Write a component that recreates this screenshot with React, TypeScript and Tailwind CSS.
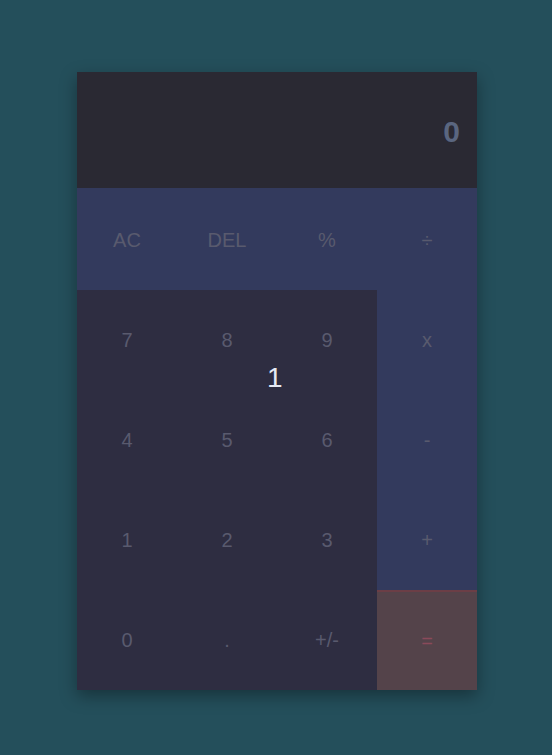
import React from 'react';

const ROWS: string[][] = [
  ['AC', 'DEL', '%', '÷'],
  ['7', '8', '9', 'x'],
  ['4', '5', '6', '-'],
  ['1', '2', '3', '+'],
  ['0', '.', '+/-', '='],
];

function Key({ label, col, row }: { label: string; col: number; row: number }) {
  const isOp = row === 0 || col === 3;
  const isEq = label === '=';
  const bg = isEq ? 'bg-[#54434a] border-t-2 border-[#6b3e46]' : isOp ? 'bg-[#333a5d]' : 'bg-[#2e2d41]';
  const h = row === 0 ? 'h-[102px] pt-[2px]' : 'h-[100px]';
  return (
    <div className={`${bg} ${h} flex items-center justify-center text-[20px] text-[#595a6e]`}>
      <span className={isEq ? 'text-[#8a4a5a]' : ''}>{label}</span>
    </div>
  );
}

export default function App() {
  return (
    <div
      className="w-[552px] h-[755px] bg-[#244f5b] flex justify-center pt-[72px] pl-[2px]"
      style={{ fontFamily: '"Liberation Sans", Arial, sans-serif' }}
    >
      <div className="relative w-[400px] h-[618px] shadow-[0_6px_16px_rgba(0,0,0,0.35)] flex flex-col">
        <div className="h-[116px] bg-[#2a2933] flex items-center justify-end pr-[17px] pt-[2px]">
          <span className="text-[30px] font-bold text-[#5a6680]">0</span>
        </div>
        <div className="grid grid-cols-4">
          {ROWS.map((r, ri) => r.map((k, ci) => <Key key={k} label={k} col={ci} row={ri} />))}
        </div>
        <span className="absolute left-[190px] top-[285px] text-[28px] text-[#e6e9f4]">1</span>
      </div>
    </div>
  );
}
